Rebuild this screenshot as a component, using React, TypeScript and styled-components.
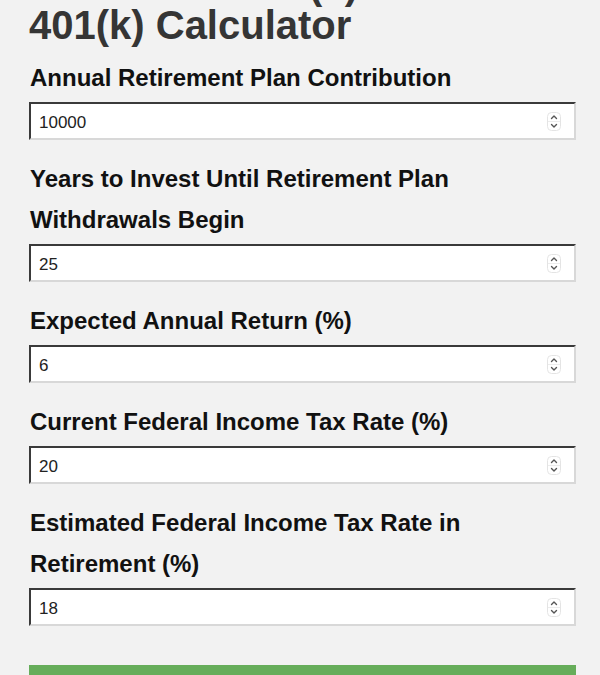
import React from "react";
import styled, { createGlobalStyle } from "styled-components";

const GlobalStyle = createGlobalStyle`
  html, body {
    margin: 0;
    padding: 0;
    background: #f2f2f2;
  }
  body {
    font-family: "Liberation Sans", Arial, Helvetica, sans-serif;
  }
`;

const fields = [
  { id: "contribution", label: "Annual Retirement Plan Contribution", value: "10000" },
  { id: "years", label: "Years to Invest Until Retirement Plan Withdrawals Begin", value: "25" },
  { id: "return", label: "Expected Annual Return (%)", value: "6" },
  { id: "currentTax", label: "Current Federal Income Tax Rate (%)", value: "20" },
  { id: "retireTax", label: "Estimated Federal Income Tax Rate in Retirement (%)", value: "18" },
];

const Spinner = () => (
  <SpinBox width="14" height="19" viewBox="0 0 14 19">
    <rect x="0.5" y="0.5" width="13" height="18" rx="4" fill="#fff" stroke="#e4e4e4" />
    <line x1="1" y1="9.5" x2="13" y2="9.5" stroke="#ececec" />
    <path d="M4.5 6.5 L7 4 L9.5 6.5" fill="none" stroke="#555" strokeWidth="1.4" strokeLinecap="round" strokeLinejoin="round" />
    <path d="M4.5 12.5 L7 15 L9.5 12.5" fill="none" stroke="#555" strokeWidth="1.4" strokeLinecap="round" strokeLinejoin="round" />
  </SpinBox>
);

const App = () => (
  <>
    <GlobalStyle />
    <Page>
      <Title>Traditional 401(k) vs. Roth 401(k) Calculator</Title>
      <Form onSubmit={(e) => e.preventDefault()}>
        {fields.map((f) => (
          <Group key={f.id}>
            <Label htmlFor={f.id}>{f.label}</Label>
            <Field>
              <NumberInput id={f.id} type="number" defaultValue={f.value} />
              <Spinner />
            </Field>
          </Group>
        ))}
        <Submit type="submit">Calculate</Submit>
      </Form>
    </Page>
  </>
);

export default App;

const Page = styled.main`
  padding: 0 24px 40px 29px;
`;

const Title = styled.h1`
  font-size: 40px;
  line-height: 40px;
  font-weight: 700;
  color: #353535;
  margin: -35px 0 12px;
`;

const Form = styled.form`
  display: flex;
  flex-direction: column;
`;

const Group = styled.div`
  display: flex;
  flex-direction: column;
  margin-bottom: 18px;
`;

const Label = styled.label`
  font-size: 24px;
  line-height: 41px;
  font-weight: 700;
  color: #111;
  padding-left: 1px;
`;

const Field = styled.div`
  display: flex;
  align-items: center;
  height: 38px;
  box-sizing: border-box;
  margin-top: 4px;
  background: #fff;
  border-top: 2px solid #3a3a3a;
  border-left: 2px solid #3a3a3a;
  border-right: 2px solid #d8d8d8;
  border-bottom: 2px solid #d8d8d8;
  padding: 0 13px 0 8px;
`;

const NumberInput = styled.input`
  flex: 1;
  min-width: 0;
  border: none;
  outline: none;
  background: transparent;
  padding: 3px 0 0;
  font-family: "Liberation Sans", Arial, sans-serif;
  font-size: 17px;
  color: #222;
  -moz-appearance: textfield;

  &::-webkit-outer-spin-button,
  &::-webkit-inner-spin-button {
    -webkit-appearance: none;
    margin: 0;
  }
`;

const SpinBox = styled.svg`
  flex: none;
  display: block;
`;

const Submit = styled.button`
  margin-top: 21px;
  height: 52px;
  border: none;
  background: #66ad5a;
  color: #fff;
  font-family: "Liberation Sans", Arial, sans-serif;
  font-size: 22px;
  font-weight: 700;
`;
